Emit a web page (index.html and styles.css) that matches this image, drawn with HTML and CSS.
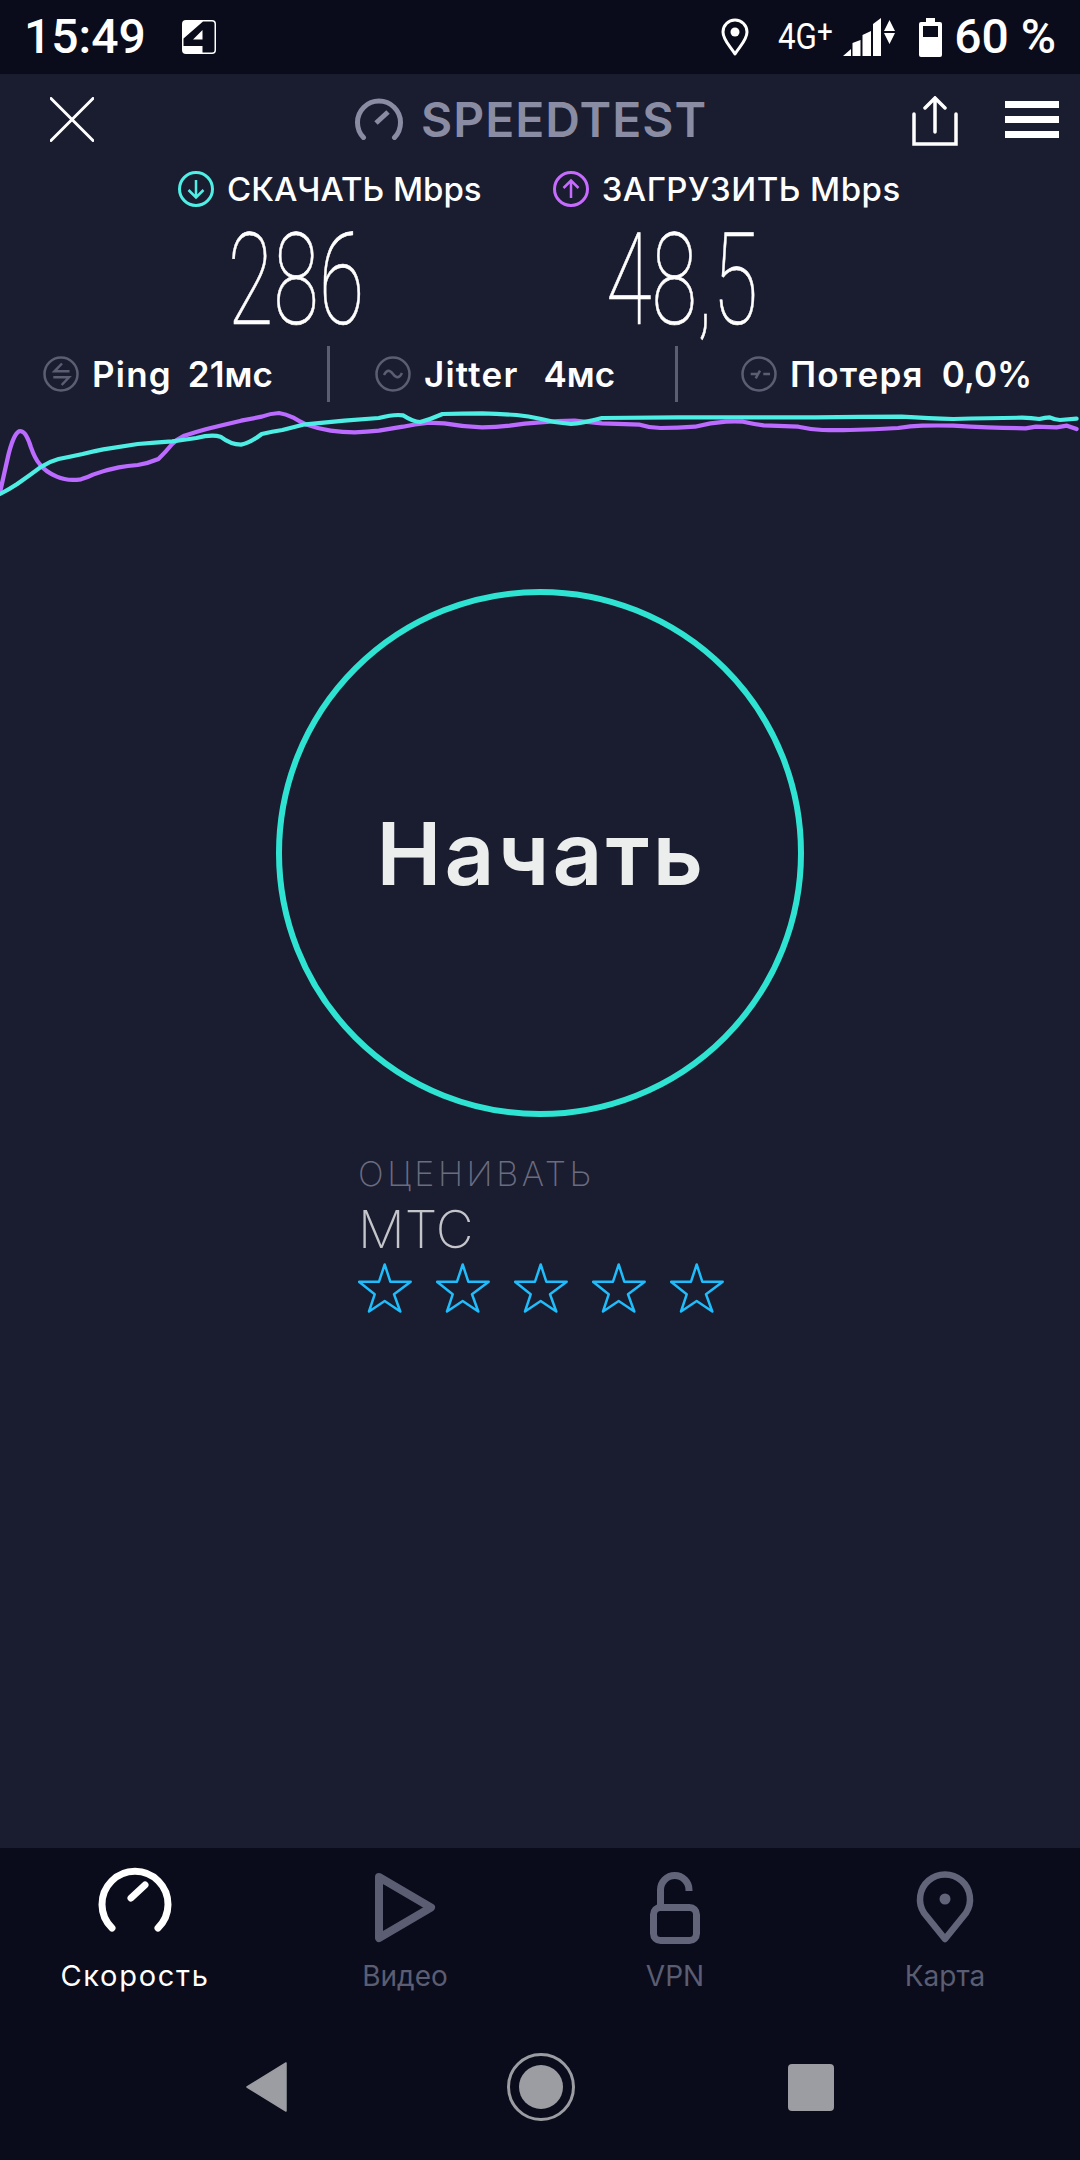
FILE: index.html
```html
<!DOCTYPE html>
<html lang="ru">
<head>
<meta charset="utf-8">
<title>Speedtest</title>
<link rel="stylesheet" href="styles.css">
</head>
<body>
<div class="app">
  <div class="statusbar">
    <span class="time">15:49</span>
    <svg class="ch-icon" width="34" height="34" viewBox="0 0 34 34"><rect width="34" height="34" rx="4" fill="#fff"/><path d="M21 1.500H30Q32.500 1.500 32.500 4V30Q32.500 32.500 30 32.500H20.500V26H1.500V18.500ZM20.500 10L11 19.500H20.500Z" fill="#0a0c1b" fill-rule="evenodd"/></svg>
    <span class="status-right">
      <svg width="28" height="38" viewBox="0 0 28 38"><path d="M14 36C9 28 2 22 2 14A12 12 0 0 1 26 14C26 22 19 28 14 36Z" fill="none" stroke="#fff" stroke-width="3" stroke-linejoin="round"/><circle cx="14" cy="14" r="4.500" fill="#fff"/></svg>
      <span class="net">4G<sup class="plus">+</sup></span>
      <svg class="signal" width="52" height="38" viewBox="0 0 52 38"><path d="M0 38L8 31V38ZM9.500 38V25L17.500 22V38ZM19.500 38V17L28 13V38ZM30 38V6L38 0V38Z" fill="#fff"/><path d="M46.500 2L52 13H41ZM46.500 26L41 15H52Z" fill="#fff"/></svg>
      <svg class="battery" width="23" height="39" viewBox="0 0 23 39"><path d="M7 0H16V4H21Q23 4 23 6V37Q23 39 21 39H2Q0 39 0 37V6Q0 4 2 4H7Z" fill="#fff"/><rect x="4" y="8" width="15" height="11" fill="#0a0c1b"/></svg>
      <span class="battery-text">60 %</span>
    </span>
  </div>

  <main class="main">
    <header class="topbar">
      <svg class="close" width="44" height="45" viewBox="0 0 44 45"><path d="M1 1.500L43 43.500M43 1.500L1 43.500" stroke="#fff" stroke-width="3" stroke-linecap="round"/></svg>
      <div class="logo">
        <svg width="48" height="42" viewBox="0 0 48 42"><path d="M8.500 39.500A21.500 21.500 0 1 1 39.500 39.500" fill="none" stroke="#8a8ca3" stroke-width="5" stroke-linecap="round"/><path d="M21 25L33 14" stroke="#8a8ca3" stroke-width="5"/></svg>
        <span class="logo-text">SPEEDTEST</span>
      </div>
      <div class="actions">
        <svg width="46" height="50" viewBox="0 0 46 50"><path d="M2 18V48H44V18" fill="none" stroke="#fff" stroke-width="3.500" stroke-linecap="round"/><path d="M23 36V3M13 12L23 2L33 12" fill="none" stroke="#fff" stroke-width="3.500" stroke-linecap="round"/></svg>
        <div class="menu"><i></i><i></i><i></i></div>
      </div>
    </header>

    <div class="labels">
      <div class="label">
        <svg width="36" height="36" viewBox="0 0 36 36"><circle cx="18" cy="18" r="16.500" fill="none" stroke="#4fefe6" stroke-width="3"/><path d="M18 9V26M10.500 19L18 26.500L25.500 19" fill="none" stroke="#4fefe6" stroke-width="2.500"/></svg>
        <span>СКАЧАТЬ Mbps</span>
      </div>
      <div class="label label-up">
        <svg width="36" height="36" viewBox="0 0 36 36"><circle cx="18" cy="18" r="16.500" fill="none" stroke="#c76bff" stroke-width="3"/><path d="M18 27V10M10.500 17L18 9.500L25.500 17" fill="none" stroke="#c76bff" stroke-width="2.500"/></svg>
        <span>ЗАГРУЗИТЬ Mbps</span>
      </div>
    </div>

    <div class="speeds">
      <div class="speed"><span>286</span></div>
      <div class="speed"><span>48,5</span></div>
    </div>

    <div class="stats">
      <div class="stat stat-ping">
        <svg width="36" height="36" viewBox="0 0 36 36"><circle cx="18" cy="18" r="16.500" fill="none" stroke="#5b5d72" stroke-width="2.500"/><path d="M19 7.500L11.500 15.300H26.500M10.300 21.300H26L18.700 29" fill="none" stroke="#5b5d72" stroke-width="2.500"/></svg>
        <span class="stat-name">Ping</span><span class="stat-value">21мс</span>
      </div>
      <i class="divider"></i>
      <div class="stat stat-jitter">
        <svg width="36" height="36" viewBox="0 0 36 36"><circle cx="18" cy="18" r="16.500" fill="none" stroke="#5b5d72" stroke-width="2.500"/><path d="M9 19C12 13 15 14 18 18C21 22 24 23 27 17" fill="none" stroke="#5b5d72" stroke-width="2.500"/></svg>
        <span class="stat-name">Jitter</span><span class="stat-value">4мс</span>
      </div>
      <i class="divider"></i>
      <div class="stat stat-loss">
        <svg width="36" height="36" viewBox="0 0 36 36"><circle cx="18" cy="18" r="16.500" fill="none" stroke="#5b5d72" stroke-width="2.500"/><path d="M9.700 18H17M19 14.700L14.700 22.300M22.300 18H29" fill="none" stroke="#5b5d72" stroke-width="2.500"/></svg>
        <span class="stat-name">Потеря</span><span class="stat-value">0,0%</span>
      </div>
    </div>

    <svg class="graph" width="1080" height="100" viewBox="0 550 3136 300" preserveAspectRatio="none">
      <path class="line-up" d="M0 815L25 700Q44 625 62 632Q76 634 90 680Q102 715 115 730Q130 752 165 768Q195 782 235 776Q255 770 270 762Q305 748 345 740Q370 736 400 733Q430 728 460 715Q480 695 500 670Q515 655 535 645Q565 635 600 625Q650 612 700 600Q730 594 760 588Q785 578 810 577Q830 580 850 590Q870 603 890 612Q925 625 960 630Q995 635 1030 635Q1065 634 1100 630Q1135 624 1170 618Q1205 610 1240 607Q1265 606 1290 608Q1345 618 1400 620Q1440 620 1480 615Q1524 608 1568 605Q1618 600 1668 600Q1708 604 1748 608Q1803 610 1858 612Q1888 622 1918 622Q1968 622 2018 618Q2063 606 2108 603Q2133 602 2158 603Q2188 610 2218 614Q2268 616 2318 618Q2353 626 2388 628Q2428 629 2468 628Q2538 626 2608 622Q2643 616 2678 615Q2723 614 2768 615Q2818 618 2868 620Q2923 622 2978 623L3008 618L3068 620L3098 615L3126 625"/>
      <path class="line-down" d="M0 820Q25 807 50 790Q85 765 120 738Q145 722 170 715Q205 708 240 700Q270 692 300 686Q350 678 400 670Q450 665 500 662Q535 658 570 652Q615 640 640 648Q670 672 700 672Q725 668 760 640Q790 632 820 628Q850 620 880 612Q940 606 1000 600Q1050 596 1100 592Q1145 580 1170 584Q1200 604 1220 604Q1250 596 1285 580Q1340 578 1400 578Q1450 580 1500 583Q1535 586 1568 594Q1610 606 1658 610Q1690 608 1748 592Q1850 591 1968 590Q2050 590 2128 590Q2250 590 2368 590Q2500 588 2618 588Q2700 593 2768 595Q2880 592 2968 591Q2995 592 3018 595Q3035 590 3048 590Q3065 598 3078 598L3126 594"/>
    </svg>

    <div class="start-wrap">
      <div class="start">Начать</div>
    </div>

    <div class="rating">
      <div class="rating-title">ОЦЕНИВАТЬ</div>
      <div class="rating-isp">МТС</div>
      <div class="stars">
        <svg width="54" height="50" viewBox="0 0 54 50"><path class="star" d="M26.700 1.500L32.300 18.700H52.700L36 31.300L42.300 48.500L26.700 38L11 48.500L16.700 31.300L1 18.700H21Z"/></svg>
        <svg width="54" height="50" viewBox="0 0 54 50"><path class="star" d="M26.700 1.500L32.300 18.700H52.700L36 31.300L42.300 48.500L26.700 38L11 48.500L16.700 31.300L1 18.700H21Z"/></svg>
        <svg width="54" height="50" viewBox="0 0 54 50"><path class="star" d="M26.700 1.500L32.300 18.700H52.700L36 31.300L42.300 48.500L26.700 38L11 48.500L16.700 31.300L1 18.700H21Z"/></svg>
        <svg width="54" height="50" viewBox="0 0 54 50"><path class="star" d="M26.700 1.500L32.300 18.700H52.700L36 31.300L42.300 48.500L26.700 38L11 48.500L16.700 31.300L1 18.700H21Z"/></svg>
        <svg width="54" height="50" viewBox="0 0 54 50"><path class="star" d="M26.700 1.500L32.300 18.700H52.700L36 31.300L42.300 48.500L26.700 38L11 48.500L16.700 31.300L1 18.700H21Z"/></svg>
      </div>
    </div>
  </main>

  <nav class="bottom">
    <div class="tabs">
      <div class="tab tab-active">
        <svg width="76" height="90" viewBox="0 0 76 90"><path d="M15 71A33 33 0 1 1 61 71" fill="none" stroke="#fff" stroke-width="7" stroke-linecap="round"/><path d="M34 41L48 28" stroke="#fff" stroke-width="7" stroke-linecap="round"/></svg>
        <span>Скорость</span>
      </div>
      <div class="tab">
        <svg width="76" height="90" viewBox="0 0 76 90"><path d="M12 20L64 50.500L12 81Z" fill="none" stroke="#5b5d72" stroke-width="8" stroke-linejoin="round"/></svg>
        <span>Видео</span>
      </div>
      <div class="tab">
        <svg width="76" height="90" viewBox="0 0 76 90"><rect x="16.500" y="50.500" width="43" height="33" rx="7" fill="none" stroke="#62647a" stroke-width="7"/><path d="M23.500 50V32.750A14.250 14.250 0 0 1 52 32.750V34" fill="none" stroke="#62647a" stroke-width="7"/></svg>
        <span>VPN</span>
      </div>
      <div class="tab">
        <svg width="76" height="90" viewBox="0 0 76 90"><path d="M38 82L17 56A25 25 0 1 1 59 56Z" fill="none" stroke="#62647a" stroke-width="6.500" stroke-linejoin="round"/><circle cx="38" cy="42" r="5.500" fill="#62647a"/></svg>
        <span>Карта</span>
      </div>
    </div>
    <div class="sysnav">
      <svg width="42" height="50" viewBox="0 0 42 50"><path d="M1 25L40 1V49Z" fill="#9c9da2" stroke="#9c9da2" stroke-width="1.500" stroke-linejoin="round"/></svg>
      <svg width="68" height="68" viewBox="0 0 68 68"><circle cx="34" cy="34" r="32.500" fill="none" stroke="#9c9da2" stroke-width="3"/><circle cx="34" cy="34" r="22" fill="#9c9da2"/></svg>
      <div class="square"></div>
    </div>
  </nav>
</div>
</body>
</html>
```

FILE: styles.css
```css
* { box-sizing: border-box; }
html, body { margin: 0; padding: 0; }
body { background: #1a1c2f; font-family: "Inter", "Liberation Sans", sans-serif; color: #fff; }
svg { display: block; flex: none; }
.app { width: 1080px; height: 2160px; display: flex; flex-direction: column; overflow: hidden; }

.statusbar { height: 74px; background: #0a0c1b; display: flex; align-items: center; padding: 0 24px 0 24px; }
.time { font-family: "Roboto", sans-serif; font-weight: 500; font-size: 48px; line-height: 1; width: 158px; }
.status-right { margin-left: auto; display: flex; align-items: center; }
.net { font-family: "Roboto", sans-serif; font-size: 36px; display: inline-block; margin-left: 29px; width: 65px; line-height: 1; white-space: nowrap; transform: scaleX(.87); transform-origin: left center; }
.plus { font-size: 32px; line-height: 0; vertical-align: 7px; }
.battery { margin-left: 24px; }
.battery-text { font-family: "Roboto", sans-serif; font-weight: 500; font-size: 48px; line-height: 1; margin-left: 12px; }

.main { flex: 1; display: flex; flex-direction: column; }
.topbar { height: 97px; display: flex; align-items: flex-start; padding: 22px 21px 0 50px; }
.close { margin-top: 1px; }
.logo { margin-left: 261px; display: flex; align-items: center; gap: 18px; }
.logo-text { font-size: 48px; font-weight: 600; color: #8a8ca3; line-height: 42px; letter-spacing: 1px; margin-top: 3px; }
.actions { margin-left: auto; display: flex; gap: 47px; }
.menu { width: 54px; height: 37px; margin-top: 5px; display: flex; flex-direction: column; justify-content: space-between; }
.menu i { display: block; height: 7px; background: #fff; }

.labels { display: flex; padding-left: 178px; gap: 71px; }
.label { display: flex; align-items: center; gap: 13px; font-size: 33px; font-weight: 500; height: 36px; line-height: 36px; }
.label-up { letter-spacing: .5px; }

.speeds { display: flex; padding: 6px 0 0 103px; height: 139px; }
.speed { width: 386px; display: flex; justify-content: center; align-items: center; }
.speed span { display: inline-block; font-family: "Roboto", sans-serif; font-weight: 100; font-size: 128px; line-height: 100px; -webkit-text-stroke: .6px #fff; transform: scaleX(.65); }

.stats { display: flex; align-items: center; padding-left: 43px; height: 56px; }
.stat { display: flex; align-items: center; font-size: 35px; font-weight: 600; }
.stat svg { margin-right: 13px; }
.stat-name { letter-spacing: 1.2px; }
.stat-ping { width: 284px; }
.stat-jitter { width: 300px; margin-left: 45px; }
.stat-loss { margin-left: 63px; }
.stat-ping .stat-value { margin-left: 16px; }
.stat-jitter .stat-value { margin-left: 25px; }
.stat-loss .stat-value { margin-left: 18px; }
.divider { display: block; width: 3px; height: 56px; background: #5b5d72; }

.graph { margin-top: 2px; }
.graph path { fill: none; stroke-width: 12.5; stroke-linecap: round; stroke-linejoin: round; }
.line-up { stroke: #bb6bff; }
.line-down { stroke: #4eeee4; }

.start-wrap { display: flex; justify-content: center; margin-top: 85px; }
.start { width: 528px; height: 528px; border-radius: 50%; border: 6px solid #2fe3d2; display: flex; align-items: center; justify-content: center; padding-left: 3px; font-size: 87px; font-weight: 600; letter-spacing: 3.2px; color: #eceded; }

.rating { padding-left: 358px; margin-top: 32px; }
.rating-title { font-size: 34px; font-weight: 200; letter-spacing: 3.6px; color: #6a6c80; line-height: 50px; }
.rating-isp { font-size: 52px; font-weight: 200; color: #c4c5ca; line-height: 62px; }
.stars { display: flex; gap: 24px; margin-top: 2px; }
.star { fill: none; stroke: #1fbdfc; stroke-width: 2.500; stroke-linejoin: round; }

.bottom { height: 312px; background: #0a0c1b; display: flex; flex-direction: column; }
.tabs { display: grid; grid-template-columns: repeat(4, 270px); padding-top: 9px; height: 179px; }
.tab { display: flex; flex-direction: column; align-items: center; font-size: 28px; color: #5b5d72; }
.tab span { line-height: 34px; margin-top: 12px; }
.tab-active { color: #fff; font-size: 29px; letter-spacing: 1.7px; }
.sysnav { display: flex; align-items: center; padding-left: 246px; height: 120px; }
.sysnav svg:nth-child(2) { margin-left: 219px; }
.square { width: 46px; height: 47px; border-radius: 4px; background: #9c9da2; margin-left: 213px; }
```
